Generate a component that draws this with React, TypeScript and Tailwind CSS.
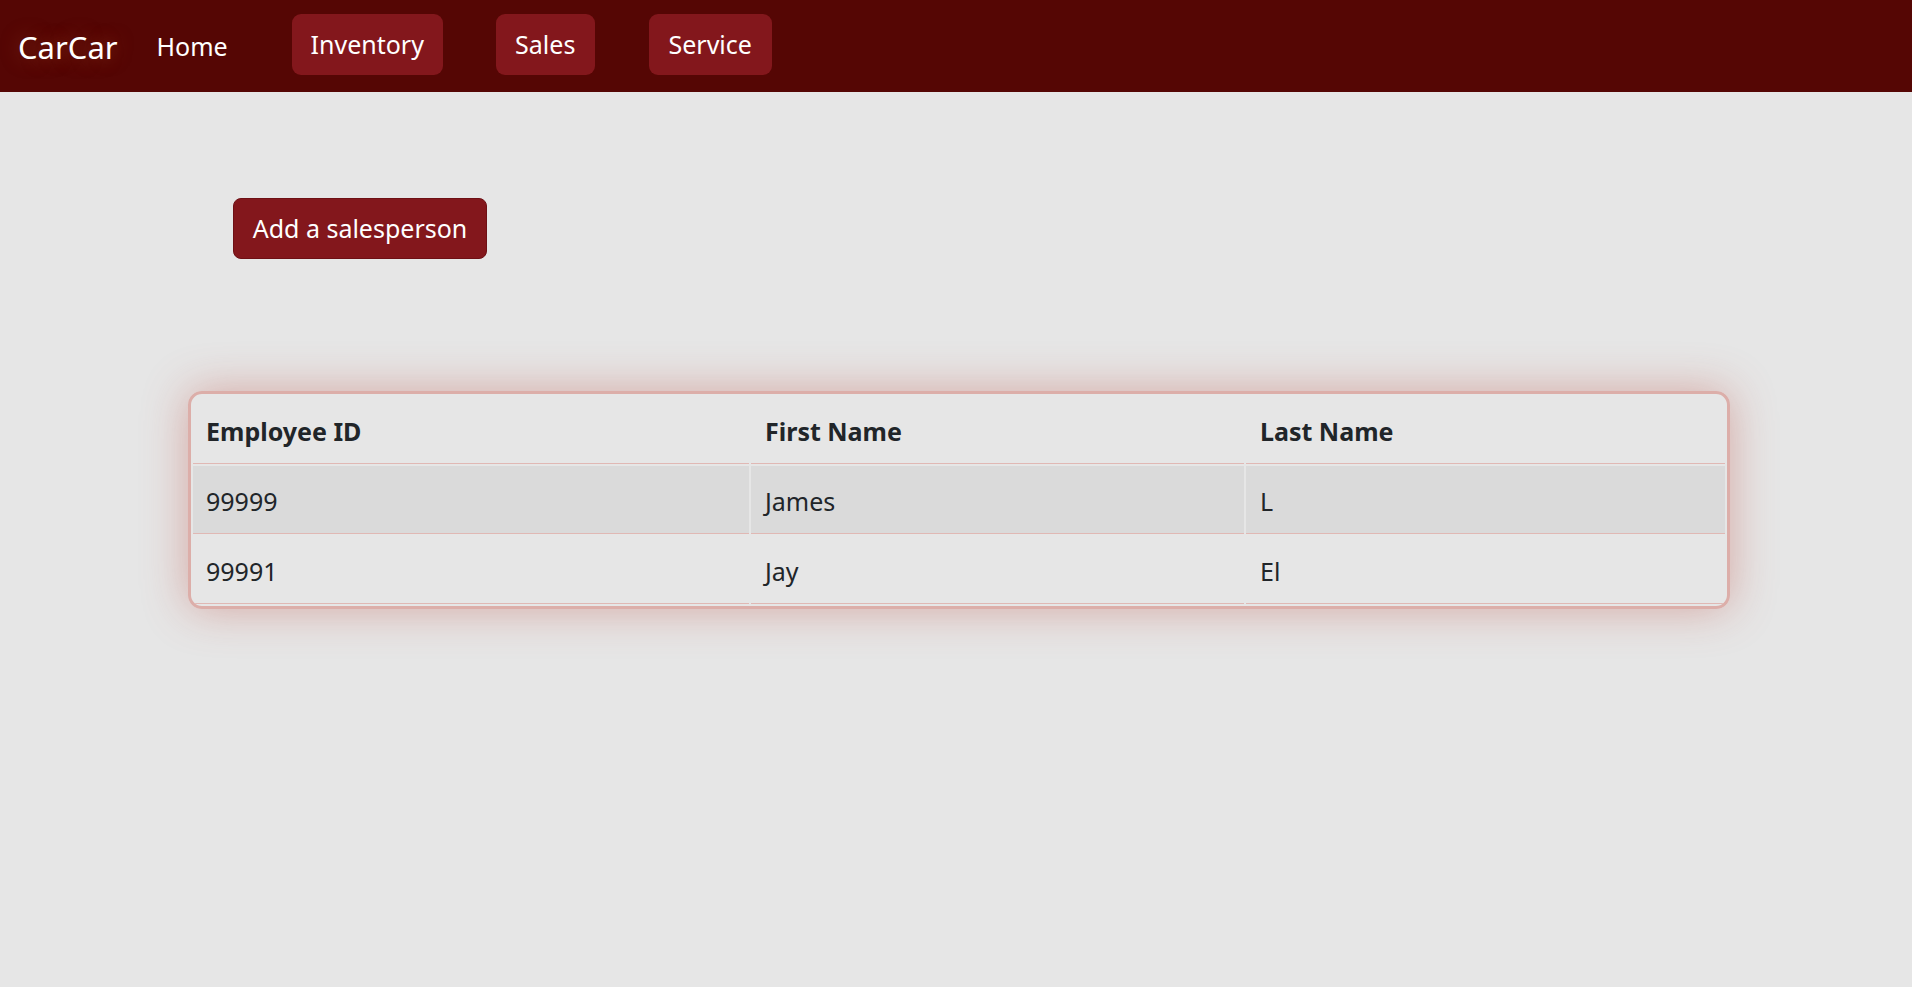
const salespeople = [
  { id: "99999", first: "James", last: "L" },
  { id: "99991", first: "Jay", last: "El" },
];

const navButtons = [
  { label: "Inventory", className: "ml-[64px] w-[151px]" },
  { label: "Sales", className: "ml-[53px] w-[99px]" },
  { label: "Service", className: "ml-[54px] w-[123px]" },
];

export default function App() {
  return (
    <div className="min-h-[987px] bg-[#e6e6e6] font-['Noto_Sans',sans-serif] text-[#212529]">
      <nav className="flex h-[92px] items-center bg-[#550604] text-white">
        <a className="ml-[18px] mt-[2px] text-[31px] leading-none [text-shadow:0_0_18px_rgba(160,70,40,0.7)]">CarCar</a>
        <a className="ml-[39px] mt-[2px] text-[25px]">Home</a>
        {navButtons.map((b) => (
          <button
            key={b.label}
            type="button"
            className={`${b.className} -mt-[3px] h-[61px] rounded-[9px] bg-[#83171c] text-[25px] text-white`}
          >
            {b.label}
          </button>
        ))}
      </nav>

      <div className="ml-[188px] w-[1542px] pt-[106px]">
        <button
          type="button"
          className="ml-[45px] h-[61px] w-[254px] rounded-[8px] border border-[#6e1015] bg-[#83171c] text-[25px] text-white"
        >
          Add a salesperson
        </button>

        <div className="mt-[132px] overflow-hidden rounded-[14px] border-[3px] border-[#dcaea9] shadow-[0_0_45px_rgba(190,80,70,0.42)]">
          <table className="w-full border-separate border-spacing-x-[2px] border-spacing-y-[2px] text-left text-[25px]">
            <thead>
              <tr>
                <th className="w-[556px] h-[68px] border-b border-[#e0b8b4] px-[13px] pt-[5px] font-bold">Employee ID</th>
                <th className="w-[493px] h-[68px] border-b border-[#e0b8b4] px-[14px] pt-[5px] font-bold">First Name</th>
                <th className="h-[68px] border-b border-[#e0b8b4] px-[14px] pt-[5px] font-bold">Last Name</th>
              </tr>
            </thead>
            <tbody>
              {salespeople.map((p, i) => (
                <tr key={p.id} className={i % 2 === 0 ? "bg-[#dadada]" : ""}>
                  <td className="h-[68px] border-b border-[#e0b8b4] px-[13px] pt-[4px]">{p.id}</td>
                  <td className="h-[68px] border-b border-[#e0b8b4] px-[14px] pt-[4px]">{p.first}</td>
                  <td className="h-[68px] border-b border-[#e0b8b4] px-[14px] pt-[4px]">{p.last}</td>
                </tr>
              ))}
            </tbody>
          </table>
        </div>
      </div>
    </div>
  );
}
